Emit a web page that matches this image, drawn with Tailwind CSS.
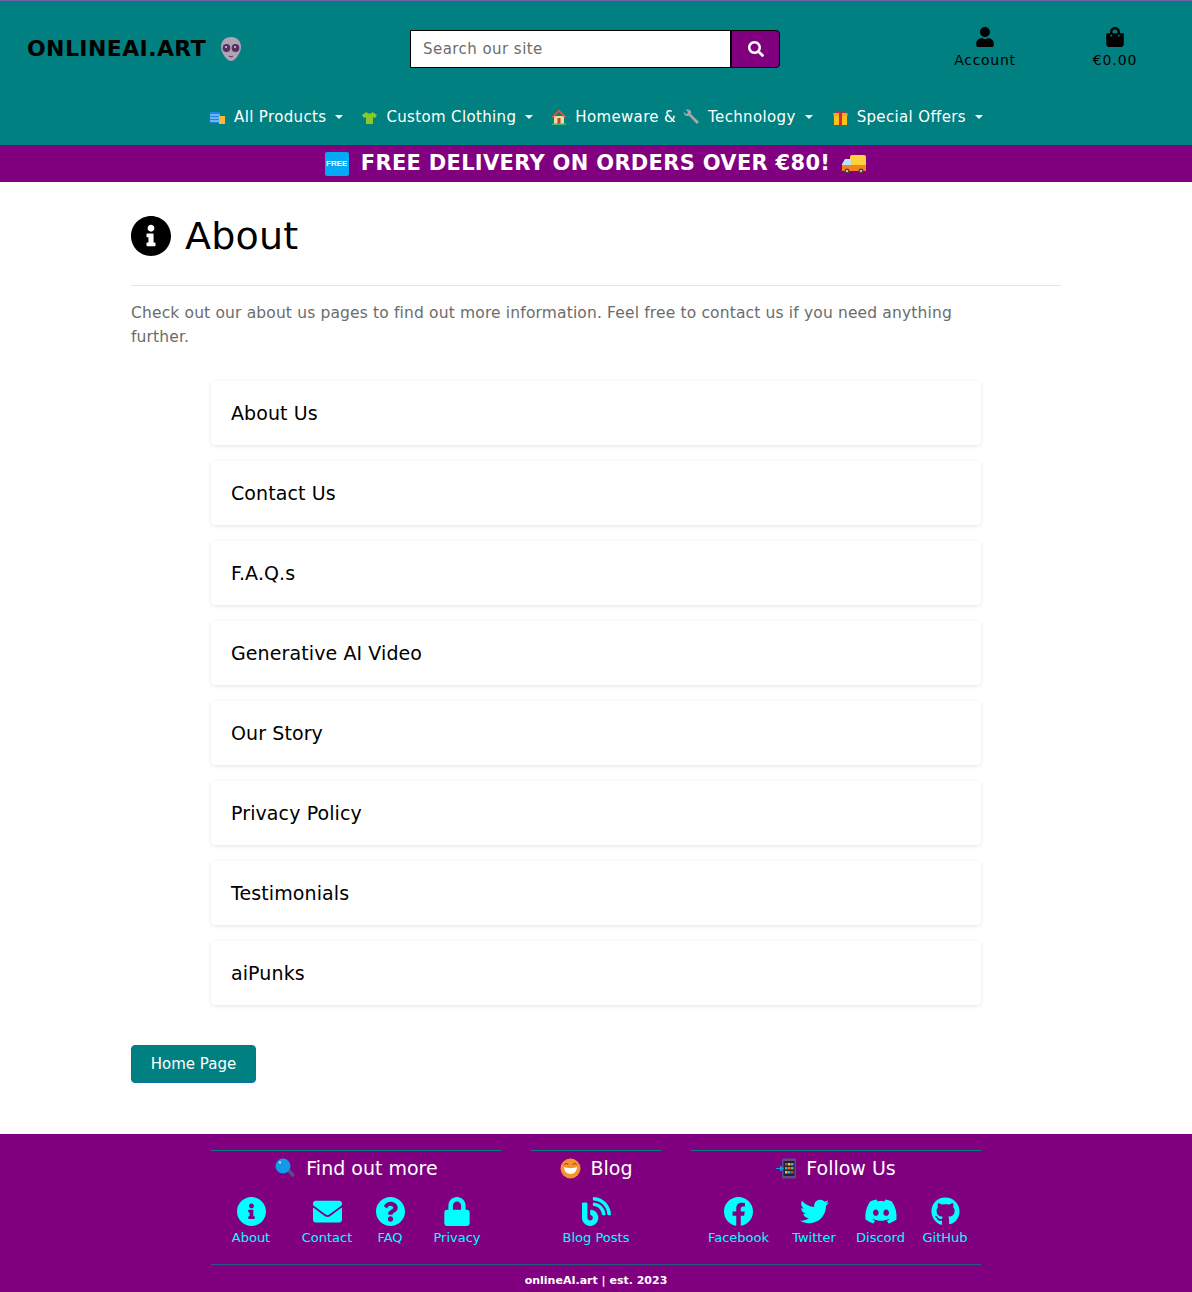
<!DOCTYPE html>
<html lang="en">
<head>
  <meta charset="UTF-8" />
  <title>About - onlineAI.art</title>
  <meta name="viewport" content="width=device-width, initial-scale=1.0" />
  <script src="https://cdn.jsdelivr.net/npm/@tailwindcss/browser@4"></script>
</head>
<body class="bg-white font-['DejaVu_Sans',sans-serif] text-black">
  <!-- header -->
  <header class="h-[145px] bg-[#008080] border-t border-[#6f62ab] flex flex-col">
    <div class="h-[95px] flex items-start">
      <div class="w-[410px] pl-[27px] pt-[34px] flex items-center gap-[12px]">
        <a class="text-[22px] leading-[28px] font-bold tracking-[0.4px] whitespace-nowrap">ONLINEAI.ART</a>
        <!-- alien -->
        <svg class="w-[26px] h-[26px]" viewBox="0 0 26 26"><path d="M13 1c6 0 10 4 10 10 0 6-6 14-10 14S3 17 3 11C3 5 7 1 13 1z" fill="#b0a3b5"/><ellipse cx="8.5" cy="12" rx="3.8" ry="4" fill="#55305f"/><ellipse cx="17.5" cy="12" rx="3.8" ry="4" fill="#55305f"/><circle cx="8" cy="11" r="1" fill="#d9cfe0"/><circle cx="17" cy="11" r="1" fill="#d9cfe0"/><path d="M11 20c1.300 1 2.700 1 4 0" stroke="#55305f" fill="none"/></svg>
      </div>
      <form class="mt-[29px] w-[370px] h-[38px] flex">
        <input type="text" placeholder="Search our site" class="w-[321px] h-full bg-white border border-black px-[12px] text-[15px] tracking-[0.45px] placeholder:text-[#6c6c6c] outline-none" />
        <button type="button" class="w-[49px] h-full bg-[#800080] border border-black rounded-r-[4px] flex items-center justify-center">
          <svg class="w-[16px] h-[16px]" viewBox="0 0 512 512" fill="#fff"><path d="M505 442.7L405.3 343c-4.500-4.500-10.600-7-17-7H372c27.600-35.300 44-79.700 44-128C416 93.100 322.900 0 208 0S0 93.100 0 208s93.100 208 208 208c48.300 0 92.700-16.400 128-44v16.300c0 6.400 2.500 12.500 7 17l99.700 99.700c9.400 9.400 24.600 9.400 33.900 0l28.300-28.300c9.400-9.400 9.400-24.600.100-34zM208 336c-70.700 0-128-57.200-128-128 0-70.700 57.200-128 128-128 70.700 0 128 57.200 128 128 0 70.700-57.200 128-128 128z"/></svg>
        </button>
      </form>
      <div class="ml-[150px] w-[110px] pt-[26px] flex flex-col items-center">
        <svg class="w-[18px] h-[20px]" viewBox="0 0 448 512"><path d="M224 256c70.700 0 128-57.300 128-128S294.700 0 224 0 96 57.300 96 128s57.300 128 128 128zm89.600 32h-16.700c-22.200 10.200-46.900 16-72.900 16s-50.600-5.800-72.900-16h-16.700C60.200 288 0 348.200 0 422.400V464c0 26.500 21.500 48 48 48h352c26.500 0 48-21.500 48-48v-41.600c0-74.200-60.200-134.400-134.400-134.400z"/></svg>
        <span class="mt-[3px] text-[14px] leading-[20px] tracking-[0.7px]">Account</span>
      </div>
      <div class="ml-[20px] w-[110px] pt-[26px] flex flex-col items-center">
        <svg class="w-[18px] h-[20px]" viewBox="0 0 448 512"><path d="M352 160v-32C352 57.420 294.579 0 224 0 153.420 0 96 57.420 96 128v32H0v272c0 44.183 35.817 80 80 80h288c44.183 0 80-35.817 80-80V160h-96zm-192-32c0-35.290 28.710-64 64-64s64 28.710 64 64v32H160v-32zm160 120c-13.255 0-24-10.745-24-24s10.745-24 24-24 24 10.745 24 24-10.745 24-24 24zm-192 0c-13.255 0-24-10.745-24-24s10.745-24 24-24 24 10.745 24 24-10.745 24-24 24z"/></svg>
        <span class="mt-[3px] text-[14px] leading-[20px] tracking-[0.9px]">€0.00</span>
      </div>
    </div>
    <nav class="h-[49px] pb-[7px] flex items-center justify-center text-white text-[15px] tracking-[0.35px] whitespace-nowrap">
      <a class="flex items-center">
        <svg class="w-[17px] h-[17px] mr-[8px]" viewBox="0 0 17 17"><rect x="1" y="3" width="10" height="11" rx="1" fill="#1e88e5"/><path d="M1 6h10M1 9h10M1 12h10" stroke="#bbdefb"/><rect x="10" y="7" width="6" height="8" fill="#f6b73c"/></svg>
        All Products
        <span class="ml-[9px] w-0 h-0 border-x-[4px] border-x-transparent border-t-[4px] border-t-white"></span>
      </a>
      <a class="ml-[18px] flex items-center">
        <svg class="w-[17px] h-[17px] mr-[8px]" viewBox="0 0 17 17"><path d="M5.500 3 1 6l2 3 2-1v7h7V8l2 1 2-3-4.500-3c-1 2-5 2-6 0z" fill="#8bc926"/></svg>
        Custom Clothing
        <span class="ml-[9px] w-0 h-0 border-x-[4px] border-x-transparent border-t-[4px] border-t-white"></span>
      </a>
      <a class="ml-[17px] flex items-center">
        <svg class="w-[18px] h-[18px] mr-[7px]" viewBox="0 0 18 18"><rect x="4" y="8" width="10" height="8" fill="#f3d6a8"/><path d="M9 1.500 1.500 9 3 10l6-6 6 6 1.500-1z" fill="#e8562a"/><rect x="7.500" y="10" width="3" height="6" fill="#a0522d"/><rect x="2" y="15.500" width="14" height="1.500" fill="#4caf73"/></svg>
        Homeware &amp;
        <svg class="w-[18px] h-[18px] mx-[7px]" viewBox="0 0 18 18"><path d="M2.500 1.500 5 4l-.5 1.500L3 6 .8 3.700C.6 6 2 8 4.500 8c.5 0 1-.1 1.400-.3l8 8.300 2.100-2-8.200-8c.3-.5.4-1 .4-1.500 0-2.500-2.500-3.500-5.700-3z" fill="#a4a9ad"/></svg>
        Technology
        <span class="ml-[9px] w-0 h-0 border-x-[4px] border-x-transparent border-t-[4px] border-t-white"></span>
      </a>
      <a class="ml-[19px] flex items-center">
        <svg class="w-[17px] h-[17px] mr-[8px]" viewBox="0 0 17 17"><rect x="2" y="6" width="13" height="10" fill="#fcc21b"/><rect x="1.500" y="4" width="14" height="3" fill="#f5a623"/><rect x="7" y="4" width="3" height="12" fill="#d7263d"/><path d="M8.500 4 5 1 4 4zM8.500 4 12 1l1 3z" fill="#d7263d"/></svg>
        Special Offers
        <span class="ml-[9px] w-0 h-0 border-x-[4px] border-x-transparent border-t-[4px] border-t-white"></span>
      </a>
    </nav>
  </header>

  <!-- delivery banner -->
  <div class="h-[37px] bg-[#800080] flex items-center justify-center text-white font-bold text-[21px] tracking-[0.3px] whitespace-nowrap">
    <span class="w-[24px] h-[24px] mr-[12px] rounded-[2px] bg-[#03a9f4] flex items-center justify-center font-['Liberation_Sans',sans-serif] text-[8px] tracking-normal">FREE</span>
    FREE DELIVERY ON ORDERS OVER €80!
    <svg class="w-[26px] h-[22px] ml-[11px]" viewBox="0 0 26 22"><rect x="9" y="2" width="16" height="14" rx="2" fill="#fdd13a"/><path d="M1 16V11l3-5h6v10z" fill="#bfe3f7"/><rect x="1" y="12" width="24" height="6" fill="#f58220"/><circle cx="6" cy="18" r="2.500" fill="#5d4037"/><circle cx="20" cy="18" r="2.500" fill="#5d4037"/><circle cx="6" cy="18" r="1" fill="#eee"/><circle cx="20" cy="18" r="1" fill="#eee"/></svg>
  </div>

  <!-- page content -->
  <main class="w-[930px] mx-auto h-[952px] pt-[34px]">
    <h1 class="flex items-center gap-[14px] h-[40px] text-[38px] leading-[40px] tracking-[0.2px]">
      <svg class="w-[40px] h-[40px]" viewBox="8 8 496 496"><path d="M256 8C119.043 8 8 119.083 8 256c0 136.997 111.043 248 248 248s248-111.003 248-248C504 119.083 392.957 8 256 8zm0 110c23.196 0 42 18.804 42 42s-18.804 42-42 42-42-18.804-42-42 18.804-42 42-42zm56 254c0 6.627-5.373 12-12 12h-88c-6.627 0-12-5.373-12-12v-24c0-6.627 5.373-12 12-12h12v-64h-12c-6.627 0-12-5.373-12-12v-24c0-6.627 5.373-12 12-12h64c6.627 0 12 5.373 12 12v100h12c6.627 0 12 5.373 12 12v24z"/></svg>
      About
    </h1>
    <hr class="mt-[29px] border-[#e3e3e3]" />
    <p class="mt-[15px] w-[860px] text-[15.500px] leading-[24px] text-[#6c6c6c] tracking-[0.15px]">Check out our about us pages to find out more information. Feel free to contact us if you need anything further.</p>
    <div class="mt-[32px] mx-[80px] flex flex-col gap-[16px]">
      <a class="h-[64px] px-[20px] flex items-center bg-white rounded-[4px] shadow-[0_1px_4px_rgba(0,0,0,0.1)] text-[19px] tracking-[0.1px]">About Us</a>
      <a class="h-[64px] px-[20px] flex items-center bg-white rounded-[4px] shadow-[0_1px_4px_rgba(0,0,0,0.1)] text-[19px] tracking-[0.1px]">Contact Us</a>
      <a class="h-[64px] px-[20px] flex items-center bg-white rounded-[4px] shadow-[0_1px_4px_rgba(0,0,0,0.1)] text-[19px] tracking-[0.1px]">F.A.Q.s</a>
      <a class="h-[64px] px-[20px] flex items-center bg-white rounded-[4px] shadow-[0_1px_4px_rgba(0,0,0,0.1)] text-[19px] tracking-[0.1px]">Generative AI Video</a>
      <a class="h-[64px] px-[20px] flex items-center bg-white rounded-[4px] shadow-[0_1px_4px_rgba(0,0,0,0.1)] text-[19px] tracking-[0.1px]">Our Story</a>
      <a class="h-[64px] px-[20px] flex items-center bg-white rounded-[4px] shadow-[0_1px_4px_rgba(0,0,0,0.1)] text-[19px] tracking-[0.1px]">Privacy Policy</a>
      <a class="h-[64px] px-[20px] flex items-center bg-white rounded-[4px] shadow-[0_1px_4px_rgba(0,0,0,0.1)] text-[19px] tracking-[0.1px]">Testimonials</a>
      <a class="h-[64px] px-[20px] flex items-center bg-white rounded-[4px] shadow-[0_1px_4px_rgba(0,0,0,0.1)] text-[19px] tracking-[0.1px]">aiPunks</a>
    </div>
    <a class="mt-[40px] w-[125px] h-[38px] flex items-center justify-center bg-[#008080] border border-[#0a6fa8] rounded-[4px] text-white text-[15px]">Home Page</a>
  </main>

  <!-- footer -->
  <footer class="h-[158px] bg-[#800080] pt-[16px] text-[#00ffff]">
    <div class="w-[770px] mx-auto">
      <div class="flex gap-[30px]">
        <section class="w-[290px] border-t border-[#008080]">
          <h4 class="h-[34px] flex items-center justify-center text-white text-[19px] font-medium whitespace-nowrap">
            <svg class="w-[22px] h-[22px] mr-[10px]" viewBox="0 0 22 22"><path d="M12 13l3-2 6 7-2.500 2.500z" fill="#5b4b8a"/><circle cx="9" cy="9" r="7.500" fill="#0f9be8"/><circle cx="6" cy="5.500" r="1" fill="#fff"/></svg>
            Find out more
          </h4>
          <div class="mt-[12px] flex">
            <a class="w-[80px] flex flex-col items-center">
              <svg class="w-[29px] h-[29px]" viewBox="8 8 496 496" fill="#00ffff"><path d="M256 8C119.043 8 8 119.083 8 256c0 136.997 111.043 248 248 248s248-111.003 248-248C504 119.083 392.957 8 256 8zm0 110c23.196 0 42 18.804 42 42s-18.804 42-42 42-42-18.804-42-42 18.804-42 42-42zm56 254c0 6.627-5.373 12-12 12h-88c-6.627 0-12-5.373-12-12v-24c0-6.627 5.373-12 12-12h12v-64h-12c-6.627 0-12-5.373-12-12v-24c0-6.627 5.373-12 12-12h64c6.627 0 12 5.373 12 12v100h12c6.627 0 12 5.373 12 12v24z"/></svg>
              <span class="mt-[2px] text-[13px] leading-[20px]">About</span>
            </a>
            <a class="w-[72px] flex flex-col items-center">
              <svg class="w-[29px] h-[29px]" viewBox="0 0 512 512" fill="#00ffff"><path d="M502.300 190.800c3.900-3.100 9.700-.2 9.700 4.700V400c0 26.500-21.500 48-48 48H48c-26.500 0-48-21.500-48-48V195.600c0-5 5.700-7.800 9.700-4.700 22.400 17.400 52.100 39.500 154.100 113.600 21.100 15.400 56.700 47.800 92.200 47.600 35.700.3 72-32.800 92.300-47.600 102-74.100 131.600-96.300 154-113.700zM256 320c23.200.4 56.600-29.200 73.400-41.400 132.700-96.300 142.800-104.700 173.400-128.700 5.800-4.500 9.200-11.500 9.200-18.900v-19c0-26.500-21.500-48-48-48H48C21.500 64 0 85.500 0 112v19c0 7.400 3.400 14.300 9.200 18.900 30.600 23.900 40.700 32.400 173.400 128.700 16.800 12.200 50.200 41.800 73.400 41.400z"/></svg>
              <span class="mt-[2px] text-[13px] leading-[20px]">Contact</span>
            </a>
            <a class="w-[54px] flex flex-col items-center">
              <svg class="w-[29px] h-[29px]" viewBox="8 8 496 496" fill="#00ffff"><path d="M504 256c0 136.997-111.043 248-248 248S8 392.997 8 256C8 119.083 119.043 8 256 8s248 111.083 248 248zM262.655 90c-54.497 0-89.255 22.957-116.549 63.758-3.536 5.286-2.353 12.415 2.715 16.258l34.699 26.310c5.205 3.947 12.621 3.008 16.665-2.122 17.864-22.658 30.113-35.797 57.303-35.797 20.429 0 45.698 13.148 45.698 32.958 0 14.976-12.363 22.667-32.534 33.976C247.128 238.528 216 254.941 216 296v4c0 6.627 5.373 12 12 12h56c6.627 0 12-5.373 12-12v-1.333c0-28.462 83.186-29.647 83.186-106.667 0-58.002-60.165-102-116.531-102zM256 338c-25.365 0-46 20.635-46 46 0 25.364 20.635 46 46 46s46-20.636 46-46c0-25.365-20.635-46-46-46z"/></svg>
              <span class="mt-[2px] text-[13px] leading-[20px]">FAQ</span>
            </a>
            <a class="w-[80px] flex flex-col items-center">
              <svg class="w-[26px] h-[29px]" viewBox="0 0 448 512" fill="#00ffff"><path d="M400 224h-24v-72C376 68.200 307.800 0 224 0S72 68.200 72 152v72H48c-26.500 0-48 21.500-48 48v192c0 26.500 21.500 48 48 48h352c26.500 0 48-21.500 48-48V272c0-26.500-21.500-48-48-48zm-104 0H152v-72c0-39.700 32.300-72 72-72s72 32.300 72 72v72z"/></svg>
              <span class="mt-[2px] text-[13px] leading-[20px]">Privacy</span>
            </a>
          </div>
        </section>
        <section class="w-[130px] border-t border-[#008080]">
          <h4 class="h-[34px] flex items-center justify-center text-white text-[19px] font-medium whitespace-nowrap">
            <svg class="w-[21px] h-[21px] mr-[10px]" viewBox="0 0 21 21"><circle cx="10.500" cy="10.500" r="10" fill="#f79329"/><path d="M4 9c3 1.500 10 1.500 13 0 0 4-2.500 7-6.500 7S4 13 4 9z" fill="#fff"/><path d="M4.500 7c.5-2 3-2 3.500 0M13 7c.5-2 3-2 3.500 0" stroke="#5d4037" fill="none"/></svg>
            Blog
          </h4>
          <div class="mt-[12px] flex justify-center">
            <a class="flex flex-col items-center">
              <svg class="w-[29px] h-[29px]" viewBox="0 0 512 512" fill="#00ffff"><path d="M172.200 226.800c-14.600-2.900-28.200 8.900-28.200 23.800V301c0 10.200 7.100 18.400 16.700 22 18.200 6.800 31.300 24.400 31.300 45 0 26.500-21.500 48-48 48s-48-21.500-48-48V120c0-13.300-10.700-24-24-24H24c-13.300 0-24 10.700-24 24v248c0 89.500 82.100 160.200 175 140.700 54.400-11.400 98.300-55.400 109.700-109.700 17.400-82.900-37-157.200-112.500-172.200zM209 0c-9.200-.5-17 6.800-17 16v31.600c0 8.500 6.600 15.500 15 15.900 129.400 7 233.400 112 240.900 241.500.5 8.400 7.500 15 15.900 15h32.100c9.200 0 16.500-7.800 16-17C503.400 139.800 372.200 8.600 209 0zm.3 96c-9.300-.7-17.300 6.700-17.300 16.100v32.100c0 8.400 6.500 15.300 14.800 15.900 76.800 6.300 138 68.200 144.900 145.200.8 8.300 7.600 14.700 15.900 14.700h32.200c9.300 0 16.800-8 16.100-17.300-8.400-110.100-96.500-198.200-206.600-206.700z"/></svg>
              <span class="mt-[2px] text-[13px] leading-[20px] whitespace-nowrap">Blog Posts</span>
            </a>
          </div>
        </section>
        <section class="w-[290px] border-t border-[#008080]">
          <h4 class="h-[34px] flex items-center justify-center text-white text-[19px] font-medium whitespace-nowrap">
            <svg class="w-[21px] h-[21px] mr-[9px]" viewBox="0 0 21 21"><rect x="6" y="0.500" width="14" height="20" rx="1.500" fill="#5f4a8b"/><rect x="7.500" y="3" width="11" height="15" fill="#20232b"/><rect x="9" y="5" width="2.500" height="2.500" fill="#e53935"/><rect x="12" y="5" width="2.500" height="2.500" fill="#fbc02d"/><rect x="15" y="5" width="2.500" height="2.500" fill="#42a5f5"/><rect x="9" y="9" width="2.500" height="2.500" fill="#42a5f5"/><rect x="12" y="9" width="2.500" height="2.500" fill="#ef6c00"/><rect x="15" y="9" width="2.500" height="2.500" fill="#66bb6a"/><rect x="9" y="13" width="2.500" height="2.500" fill="#fbc02d"/><rect x="12" y="13" width="2.500" height="2.500" fill="#42a5f5"/><rect x="15" y="13" width="2.500" height="2.500" fill="#e53935"/><path d="M0 10h4V7.500L8 10.500l-4 3V11H0z" fill="#0f9be8"/></svg>
            Follow Us
          </h4>
          <div class="mt-[12px] flex">
            <a class="w-[95px] flex flex-col items-center">
              <svg class="w-[29px] h-[29px]" viewBox="8 8 496 496" fill="#00ffff"><path d="M504 256C504 119 393 8 256 8S8 119 8 256c0 123.780 90.690 226.380 209.250 245V327.690h-63V256h63v-54.640c0-62.150 37-96.480 93.670-96.480 27.140 0 55.520 4.840 55.520 4.840v61h-31.280c-30.800 0-40.410 19.120-40.410 38.730V256h68.780l-11 71.690h-57.780V501C413.310 482.380 504 379.780 504 256z"/></svg>
              <span class="mt-[2px] text-[13px] leading-[20px]">Facebook</span>
            </a>
            <a class="w-[56px] flex flex-col items-center">
              <svg class="w-[29px] h-[29px]" viewBox="0 0 512 512" fill="#00ffff"><path d="M459.370 151.716c.325 4.548.325 9.097.325 13.645 0 138.720-105.583 298.558-298.558 298.558-59.452 0-114.680-17.219-161.137-47.106 8.447.974 16.568 1.299 25.340 1.299 49.055 0 94.213-16.568 130.274-44.832-46.132-.975-84.792-31.188-98.112-72.772 6.498.974 12.995 1.624 19.818 1.624 9.421 0 18.843-1.300 27.614-3.573-48.081-9.747-84.143-51.980-84.143-102.985v-1.299c13.969 7.797 30.214 12.670 47.431 13.319-28.264-18.843-46.781-51.005-46.781-87.391 0-19.492 5.197-37.360 14.294-52.954 51.655 63.675 129.300 105.258 216.365 109.807-1.624-7.797-2.599-15.918-2.599-24.040 0-57.828 46.782-104.934 104.934-104.934 30.213 0 57.502 12.670 76.670 33.137 23.715-4.548 46.456-13.320 66.599-25.340-7.798 24.366-24.366 44.833-46.132 57.827 21.117-2.273 41.584-8.122 60.426-16.243-14.292 20.791-32.161 39.308-52.628 54.253z"/></svg>
              <span class="mt-[2px] text-[13px] leading-[20px]">Twitter</span>
            </a>
            <a class="w-[77px] flex flex-col items-center">
              <svg class="w-[34px] h-[29px]" viewBox="0 0 640 512" fill="#00ffff"><path d="M524.531 69.836a1.500 1.500 0 0 0-.764-.7A485.065 485.065 0 0 0 404.081 32.030a1.816 1.816 0 0 0-1.923.91 337.461 337.461 0 0 0-14.900 30.600 447.848 447.848 0 0 0-134.426 0 309.541 309.541 0 0 0-15.135-30.600 1.890 1.890 0 0 0-1.924-.91A483.689 483.689 0 0 0 116.085 69.137a1.712 1.712 0 0 0-.788.676C39.068 183.651 18.186 294.690 28.430 404.354a2.016 2.016 0 0 0 .765 1.375A487.666 487.666 0 0 0 176.020 479.918a1.900 1.900 0 0 0 2.063-.676A348.200 348.200 0 0 0 208.120 430.400a1.860 1.860 0 0 0-1.019-2.588 321.173 321.173 0 0 1-45.868-21.853 1.885 1.885 0 0 1-.185-3.126c3.082-2.309 6.166-4.711 9.109-7.137a1.819 1.819 0 0 1 1.900-.256c96.229 43.917 200.410 43.917 295.500 0a1.812 1.812 0 0 1 1.924.233c2.944 2.426 6.027 4.851 9.132 7.160a1.884 1.884 0 0 1-.162 3.126 301.407 301.407 0 0 1-45.890 21.830 1.875 1.875 0 0 0-1 2.611 391.055 391.055 0 0 0 30.014 48.815 1.864 1.864 0 0 0 2.063.7A486.048 486.048 0 0 0 610.700 405.729a1.882 1.882 0 0 0 .765-1.352C623.729 277.594 590.933 167.465 524.531 69.836zM222.491 337.580c-28.972 0-52.844-26.587-52.844-59.239S193.056 219.100 222.491 219.100c29.665 0 53.306 26.820 52.843 59.239C275.334 310.993 251.924 337.580 222.491 337.580zm195.380 0c-28.971 0-52.843-26.587-52.843-59.239S388.437 219.100 417.871 219.100c29.667 0 53.307 26.820 52.844 59.239C470.715 310.993 447.538 337.580 417.871 337.580z"/></svg>
              <span class="mt-[2px] text-[13px] leading-[20px]">Discord</span>
            </a>
            <a class="w-[52px] flex flex-col items-center">
              <svg class="w-[29px] h-[29px]" viewBox="0 0 496 512" fill="#00ffff"><path d="M244.800 8C106.100 8 0 113.300 0 252c0 110.900 69.800 205.800 169.500 239.200 12.800 2.300 17.300-5.600 17.300-12.100 0-6.200-.3-40.400-.3-61.400 0 0-70 15-84.700-29.800 0 0-11.400-29.100-27.800-36.600 0 0-22.900-15.700 1.600-15.400 0 0 24.900 2 38.600 25.800 21.900 38.600 58.600 27.500 72.900 20.900 2.300-16 8.800-27.100 16-33.700-55.900-6.200-112.300-14.300-112.300-110.500 0-27.500 7.600-41.300 23.600-58.900-2.600-6.500-11.100-33.300 2.600-67.900 20.900-6.500 69 27 69 27 20-5.600 41.500-8.500 62.800-8.500s42.800 2.900 62.800 8.500c0 0 48.100-33.600 69-27 13.700 34.700 5.200 61.400 2.600 67.900 16 17.700 25.800 31.500 25.800 58.900 0 96.500-58.900 104.200-114.800 110.500 9.200 7.900 17 22.900 17 46.400 0 33.700-.3 63.800-.3 71.900 0 6.500 4.600 14.400 17.300 12.100C428.200 457.800 496 362.900 496 252 496 113.300 383.500 8 244.800 8z"/></svg>
              <span class="mt-[2px] text-[13px] leading-[20px]">GitHub</span>
            </a>
          </div>
        </section>
      </div>
      <div class="mt-[16px] border-t border-[#008080]/70 pt-[7px] text-center text-white text-[11px] leading-[17px] font-bold">onlineAI.art | est. 2023</div>
    </div>
  </footer>
</body>
</html>
